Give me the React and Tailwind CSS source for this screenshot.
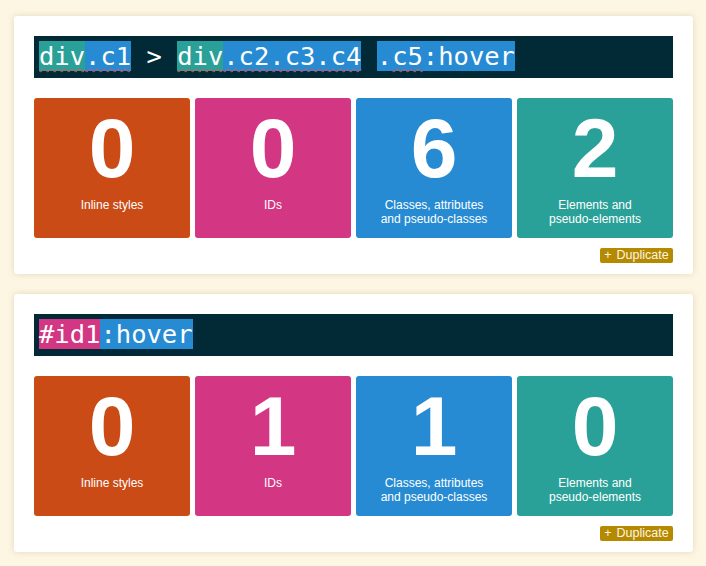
const cards = [
  {
    tokens: [
      { text: 'div', bg: 'bg-[#2aa198]', wavy: true },
      { text: '.c1', bg: 'bg-[#268bd2]', wavy: true },
      { text: ' > ' },
      { text: 'div', bg: 'bg-[#2aa198]', wavy: true },
      { text: '.c2.c3.c4', bg: 'bg-[#268bd2]', wavy: true },
      { text: ' ' },
      { text: '.', bg: 'bg-[#268bd2]' },
      { text: 'c5', bg: 'bg-[#268bd2]', wavy: true },
      { text: ':hover', bg: 'bg-[#268bd2]' },
    ],
    counts: [0, 0, 6, 2],
  },
  {
    tokens: [
      { text: '#id1', bg: 'bg-[#d33682]' },
      { text: ':hover', bg: 'bg-[#268bd2]' },
    ],
    counts: [0, 1, 1, 0],
  },
];

const boxes = [
  { color: 'bg-[#cb4b16]', label: ['Inline styles'] },
  { color: 'bg-[#d33682]', label: ['IDs'] },
  { color: 'bg-[#268bd2]', label: ['Classes, attributes', 'and pseudo-classes'] },
  { color: 'bg-[#2aa198]', label: ['Elements and', 'pseudo-elements'] },
];

function SelectorCard({ tokens, counts }) {
  return (
    <div className="bg-white rounded-[3px] shadow-[0_0_6px_rgba(180,160,110,0.35)] px-5 pt-5 pb-[11px]">
      <div className="bg-[#022a36] h-[42px] pl-[5px] pt-[4px] text-white text-[25.5px] leading-[33px] whitespace-pre font-['DejaVu_Sans_Mono',monospace]">
        {tokens.map((t, i) => (
          <span
            key={i}
            className={`${t.bg || ''} ${t.wavy ? 'underline decoration-wavy decoration-[#e0524f] decoration-1 underline-offset-[3px]' : ''}`}
          >
            {t.text}
          </span>
        ))}
      </div>
      <div className="mt-5 flex gap-[5px] font-['Liberation_Sans',Arial,sans-serif] text-white">
        {boxes.map((b, i) => (
          <div key={i} className={`${b.color} flex-1 h-[140px] rounded-[3px] flex flex-col items-center pt-2`}>
            <div className="text-[84px] leading-none font-bold">{counts[i]}</div>
            <div className="mt-[8px] text-[12px] leading-[14px] text-center">
              {b.label.map((l, j) => (
                <div key={j}>{l}</div>
              ))}
            </div>
          </div>
        ))}
      </div>
      <div className="flex justify-end mt-[10px]">
        <button className="bg-[#b58900] text-[#fdf6e3] rounded-[2px] h-[15px] w-[73px] text-[12.5px] leading-[15px] font-['Liberation_Sans',Arial,sans-serif] flex items-center justify-center gap-[5px]">
          <span>+</span>
          <span>Duplicate</span>
        </button>
      </div>
    </div>
  );
}

export default function App() {
  return (
    <div className="min-h-[566px] bg-[#fdf6e3] pl-[14px] pr-[13px] pt-4 pb-4 flex flex-col gap-5 w-[706px]">
      {cards.map((c, i) => (
        <SelectorCard key={i} {...c} />
      ))}
    </div>
  );
}
